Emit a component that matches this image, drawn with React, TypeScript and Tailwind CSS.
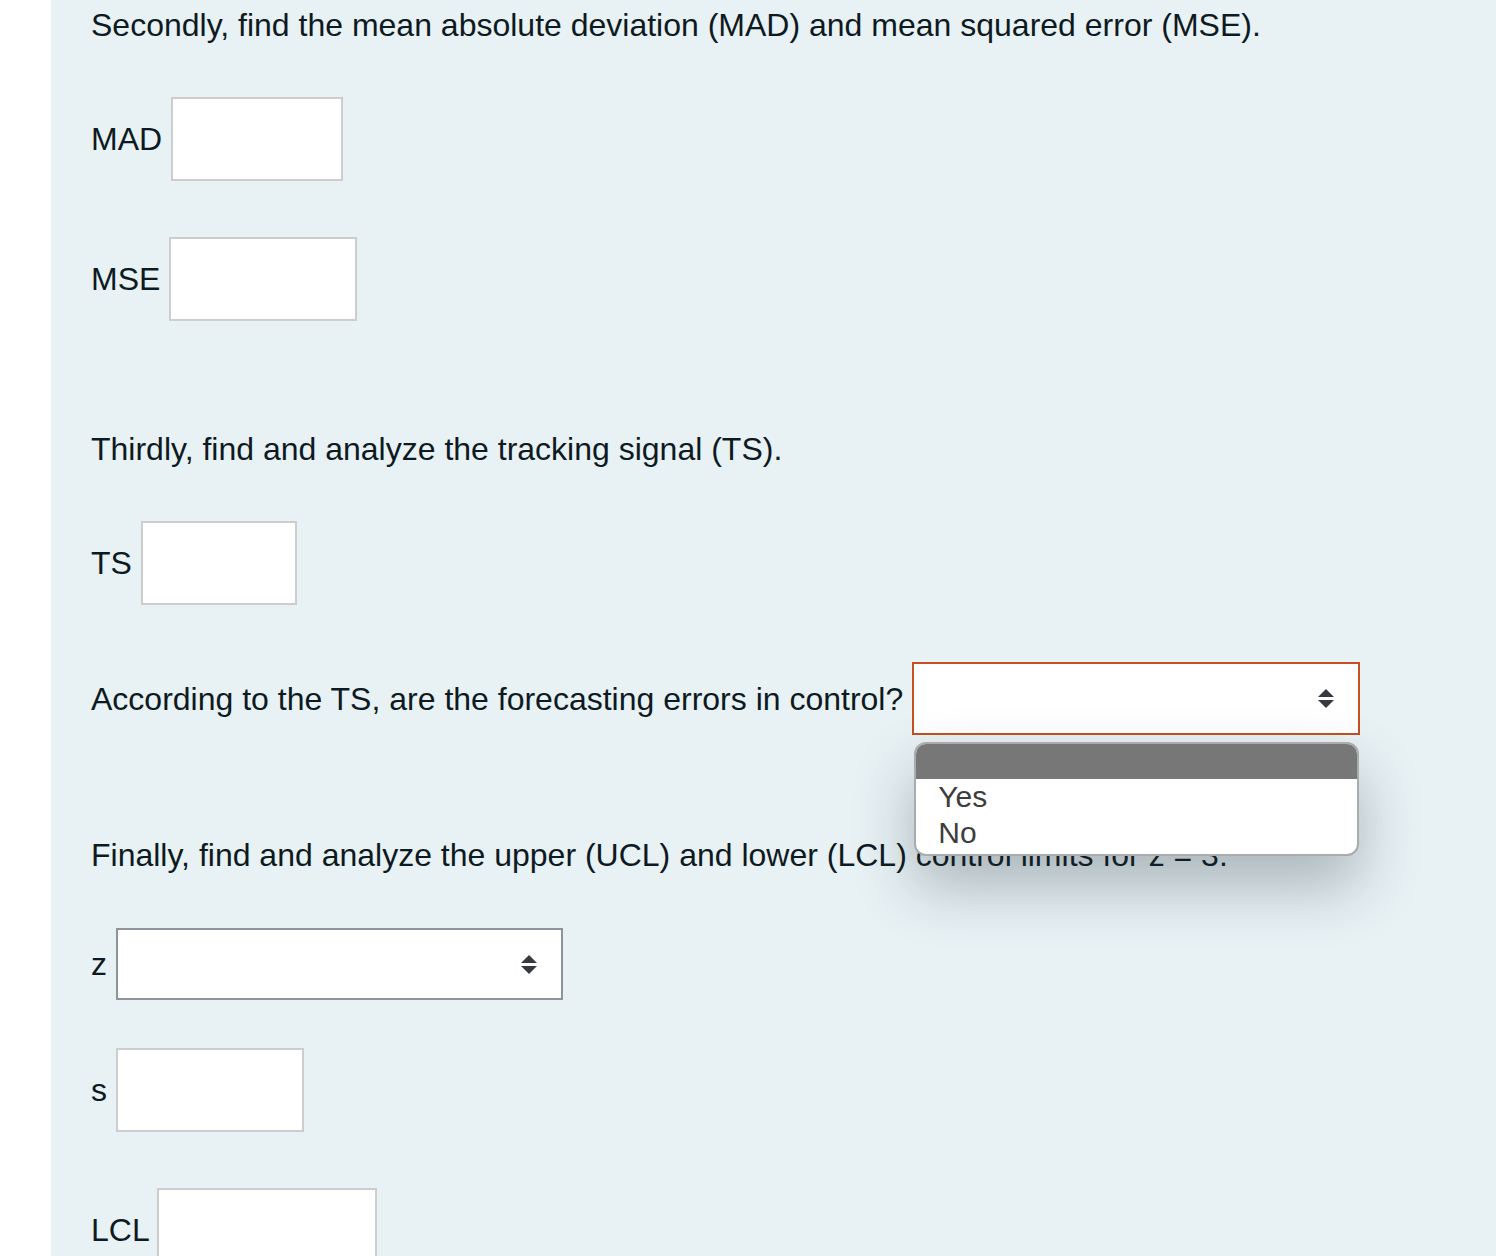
import React from "react";

const Arrows = () => (
  <svg width="16" height="19" viewBox="0 0 16 19" className="shrink-0">
    <polygon points="8,0 16,8 0,8" fill="#363b40" />
    <polygon points="0,11 16,11 8,19" fill="#363b40" />
  </svg>
);

const Input = ({ w }: { w: string }) => (
  <div className={`${w} h-[84px] bg-white border-2 border-[#cdcdcd] shrink-0`} />
);

export default function App() {
  return (
    <div className="w-[1496px] h-[1256px] bg-white flex overflow-hidden">
      <div className="w-[51px] shrink-0 bg-white" />
      <div
        className="flex-1 bg-[#e8f1f4] pl-[40px] text-[#0e1a22] text-[32px] leading-none"
        style={{ fontFamily: '"Liberation Sans", Arial, sans-serif' }}
      >
        <div className="h-[50px] flex items-center">
          Secondly, find the mean absolute deviation (MAD) and mean squared error (MSE).
        </div>

        <div className="mt-[47px] flex items-center gap-[9px]">
          <span>MAD</span>
          <Input w="w-[172px]" />
        </div>

        <div className="mt-[56px] flex items-center gap-[9px]">
          <span>MSE</span>
          <Input w="w-[188px]" />
        </div>

        <div className="mt-[103px] h-[50px] flex items-center">
          Thirdly, find and analyze the tracking signal (TS).
        </div>

        <div className="mt-[47px] flex items-center gap-[9px]">
          <span>TS</span>
          <Input w="w-[156px]" />
        </div>

        <div className="mt-[57px] flex items-center gap-[9px]">
          <span>According to the TS, are the forecasting errors in control?</span>
          <div className="relative">
            <div className="w-[448px] h-[73px] bg-white border-2 border-[#c4511f] flex items-center justify-end pr-[24px]">
              <Arrows />
            </div>
            <div className="absolute left-[2px] top-[80px] w-[445px] h-[114px] bg-white border-2 border-[#a9abad] rounded-[12px] overflow-hidden shadow-[0_30px_60px_rgba(30,45,55,0.3)] text-[30px] text-[#3d3d3d] z-10">
              <div className="h-[35px] bg-[#777777]" />
              <div className="h-[36px] flex items-center pl-[22px]">Yes</div>
              <div className="h-[36px] flex items-center pl-[22px]">No</div>
            </div>
          </div>
        </div>

        <div className="mt-[95px] h-[50px] flex items-center">
          Finally, find and analyze the upper (UCL) and lower (LCL) control limits for z = 3.
        </div>

        <div className="mt-[48px] flex items-center gap-[9px]">
          <span>z</span>
          <div className="w-[447px] h-[72px] bg-white border-2 border-[#8e9499] flex items-center justify-end pr-[24px]">
            <Arrows />
          </div>
        </div>

        <div className="mt-[48px] flex items-center gap-[9px]">
          <span>s</span>
          <Input w="w-[188px]" />
        </div>

        <div className="mt-[56px] flex items-center gap-[7px]">
          <span>LCL</span>
          <Input w="w-[220px]" />
        </div>
      </div>
    </div>
  );
}
